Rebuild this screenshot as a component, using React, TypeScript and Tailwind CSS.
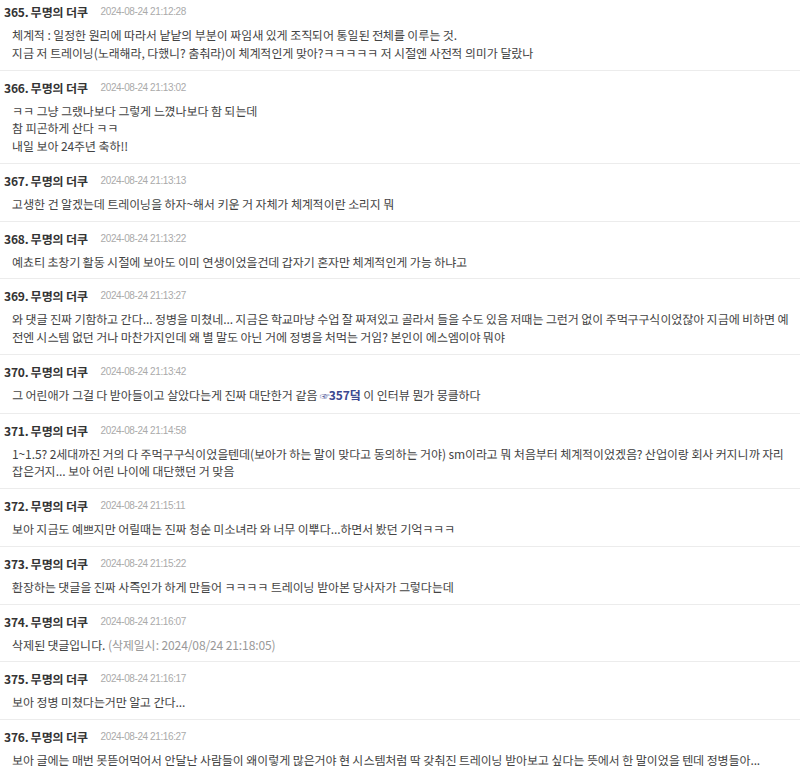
import React from "react";

type C = { n: number; date: string; lines: React.ReactNode[] };

const comments: C[] = [
  { n: 365, date: "2024-08-24 21:12:28", lines: ["체계적 : 일정한 원리에 따라서 낱낱의 부분이 짜임새 있게 조직되어 통일된 전체를 이루는 것.", "지금 저 트레이닝(노래해라, 다했니? 춤춰라)이 체계적인게 맞아?ㅋㅋㅋㅋㅋ 저 시절엔 사전적 의미가 달랐나"] },
  { n: 366, date: "2024-08-24 21:13:02", lines: ["ㅋㅋ 그냥 그랬나보다 그렇게 느꼈나보다 함 되는데", "참 피곤하게 산다 ㅋㅋ", "내일 보아 24주년 축하!!"] },
  { n: 367, date: "2024-08-24 21:13:13", lines: ["고생한 건 알겠는데 트레이닝을 하자~해서 키운 거 자체가 체계적이란 소리지 뭐"] },
  { n: 368, date: "2024-08-24 21:13:22", lines: ["예쵸티 초창기 활동 시절에 보아도 이미 연생이었을건데 갑자기 혼자만 체계적인게 가능 하냐고"] },
  { n: 369, date: "2024-08-24 21:13:27", lines: ["와 댓글 진짜 기함하고 간다... 정병을 미쳤네... 지금은 학교마냥 수업 잘 짜져있고 골라서 들을 수도 있음 저때는 그런거 없이 주먹구구식이었잖아 지금에 비하면 예전엔 시스템 없던 거나 마찬가지인데 왜 별 말도 아닌 거에 정병을 처먹는 거임? 본인이 에스엠이야 뭐야"] },
  { n: 370, date: "2024-08-24 21:13:42", lines: [<>그 어린애가 그걸 다 받아들이고 살았다는게 진짜 대단한거 같음 <span className="font-bold text-[#3b4890]"><span className="text-[10px] tracking-[-1px]">☞</span>357덬</span> 이 인터뷰 뭔가 뭉클하다</>] },
  { n: 371, date: "2024-08-24 21:14:58", lines: ["1~1.5? 2세대까진 거의 다 주먹구구식이었을텐데(보아가 하는 말이 맞다고 동의하는 거야) sm이라고 뭐 처음부터 체계적이었겠음? 산업이랑 회사 커지니까 자리잡은거지... 보아 어린 나이에 대단했던 거 맞음"] },
  { n: 372, date: "2024-08-24 21:15:11", lines: ["보아 지금도 예쁘지만 어릴때는 진짜 청순 미소녀라 와 너무 이뿌다...하면서 봤던 기억ㅋㅋㅋ"] },
  { n: 373, date: "2024-08-24 21:15:22", lines: ["환장하는 댓글을 진짜 사즉인가 하게 만들어 ㅋㅋㅋㅋ 트레이닝 받아본 당사자가 그렇다는데"] },
  { n: 374, date: "2024-08-24 21:16:07", lines: [<>삭제된 댓글입니다. <span className="text-[#999]">(삭제일시: 2024/08/24 21:18:05)</span></>] },
  { n: 375, date: "2024-08-24 21:16:17", lines: ["보아 정병 미쳤다는거만 알고 간다..."] },
  { n: 376, date: "2024-08-24 21:16:27", lines: ["보아 글에는 매번 못뜯어먹어서 안달난 사람들이 왜이렇게 많은거야 현 시스템처럼 딱 갖춰진 트레이닝 받아보고 싶다는 뜻에서 한 말이었을 텐데 정병들아..."] },
];

export default function App() {
  return (
    <div
      className="w-[800px] h-[773px] overflow-hidden bg-white"
      style={{ fontFamily: '"Noto Sans KR", "Noto Sans CJK KR", "Liberation Sans", sans-serif' }}
    >
      {comments.map((c, idx) => (
        <div
          key={c.n}
          className={`border-b border-[#ececec] pb-[8px] ${idx === 0 ? "pt-[3px]" : "pt-[8px]"}`}
        >
          <div className="flex items-center pl-[4px] h-[18px] leading-[18px]">
            <span className="text-[12px] font-bold text-[#333] tracking-[-0.2px]">{c.n}. 무명의 더쿠</span>
            <span
              className="ml-[13px] text-[10px] text-[#aaa] tracking-[-0.4px]"
              style={{ fontFamily: '"Liberation Sans", Arial, sans-serif' }}
            >
              {c.date}
            </span>
          </div>
          <div className="mt-[5px] pl-[12px] pr-[8px] text-[12px] leading-[17.75px] text-[#444] tracking-[-0.1px]">
            {c.lines.map((l, i) => (
              <div key={i}>{l}</div>
            ))}
          </div>
        </div>
      ))}
    </div>
  );
}
